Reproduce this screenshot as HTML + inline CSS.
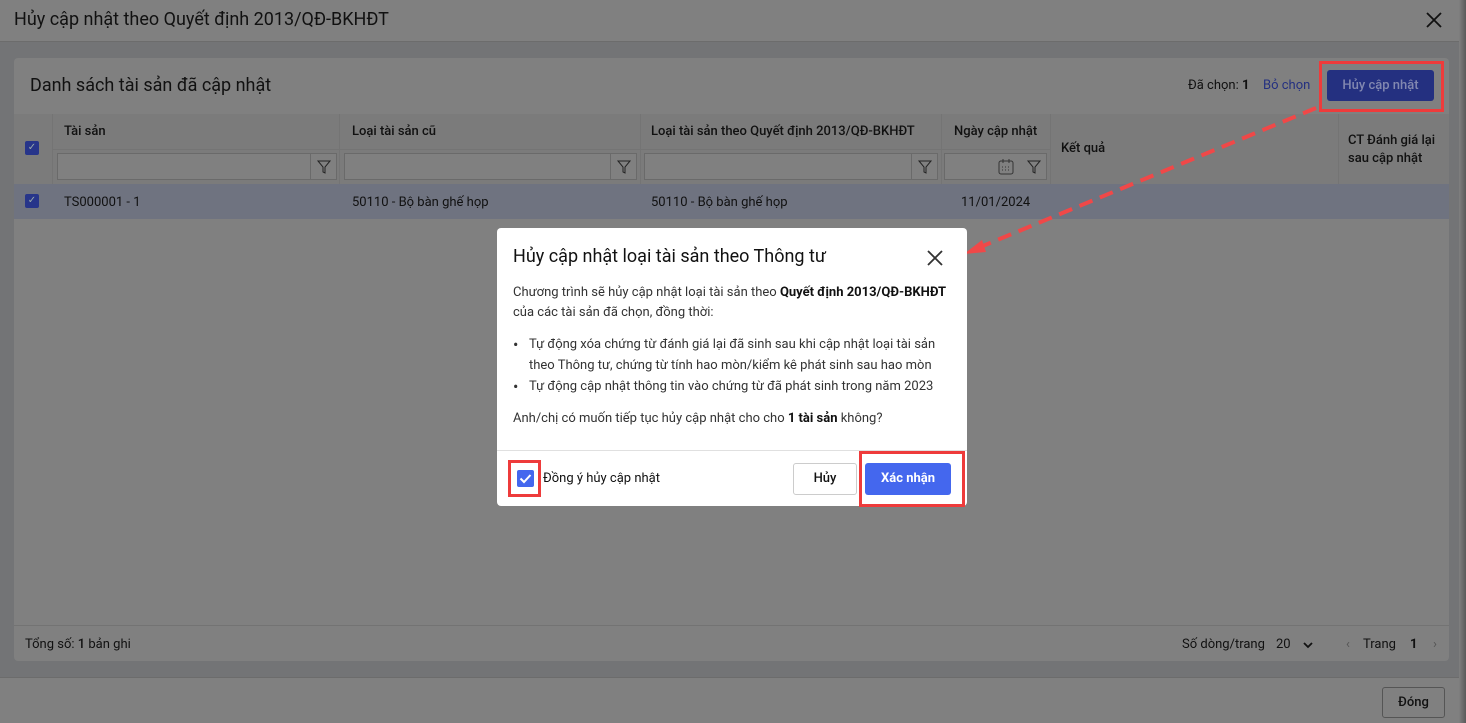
<!DOCTYPE html>
<html><head><meta charset="utf-8"><style>
*{box-sizing:border-box;margin:0;padding:0}
body{width:1466px;height:723px;overflow:hidden;font-family:"Roboto","Liberation Sans",sans-serif;background:#737476;position:relative;color:#1a1a1a}
.a{position:absolute}
.top{left:0;top:0;width:1466px;height:42px;background:#808080;border-bottom:1px solid #6c6c6c}
.panel{left:14px;top:58px;width:1435px;height:603px;background:#808080;border-radius:4px}
.th{background:#7b7b7b}
.cb{width:14px;height:14px;background:#27358a;border-radius:2px;color:#9aa;font-size:10px;line-height:14px;text-align:center}
.inp{height:27px;border:1px solid #6a6a6a;background:#808080}
.fi{position:absolute;right:0;top:0;width:26px;height:25px;border-left:1px solid #6a6a6a}
.t13{font-size:13px}
.dlg{left:497px;top:228px;width:470px;height:278px;background:#fff;border-radius:4px}
.red{border:3px solid #ee3b3b}
</style></head><body>
<div class="a top"></div>
<div class="a" style="left:14px;top:9px;font-size:18px;color:#111">Hủy cập nhật theo Quyết định 2013/QĐ-BKHĐT</div>
<svg class="a" style="left:1425px;top:11px" width="18" height="18"><path d="M2 2L16 16M16 2L2 16" stroke="#111" stroke-width="1.8"/></svg>
<div class="a panel"></div>
<div class="a" style="left:30px;top:75px;font-size:18px;color:#111">Danh sách tài sản đã cập nhật</div>
<div class="a t13" style="left:1188px;top:78px;color:#111">Đã chọn: <b>1</b></div>
<div class="a t13" style="left:1263px;top:78px;color:#243080">Bỏ chọn</div>
<div class="a" style="left:1327px;top:70px;width:107px;height:31px;background:#243080;border-radius:3px;color:#8288b0;font-size:13px;font-weight:500;text-align:center;line-height:31px">Hủy cập nhật</div>
<div class="a red" style="left:1319px;top:61px;width:125px;height:51px"></div>
<div class="a th" style="left:14px;top:114px;width:1435px;height:70px"></div>
<div class="a" style="left:52px;top:114px;width:1px;height:105px;background:#747474"></div>
<div class="a" style="left:339px;top:114px;width:1px;height:105px;background:#747474"></div>
<div class="a" style="left:640px;top:114px;width:1px;height:105px;background:#747474"></div>
<div class="a" style="left:941px;top:114px;width:1px;height:105px;background:#747474"></div>
<div class="a" style="left:1050px;top:114px;width:1px;height:105px;background:#747474"></div>
<div class="a" style="left:1338px;top:114px;width:1px;height:105px;background:#747474"></div>
<div class="a" style="left:52px;top:149px;width:998px;height:1px;background:#747474"></div>
<div class="a cb" style="left:25px;top:141px">✓</div>
<div class="a t13" style="left:64px;top:124px;color:#111;font-weight:500">Tài sản</div>
<div class="a t13" style="left:352px;top:124px;color:#111;font-weight:500">Loại tài sản cũ</div>
<div class="a t13" style="left:651px;top:124px;color:#111;font-weight:500">Loại tài sản theo Quyết định 2013/QĐ-BKHĐT</div>
<div class="a t13" style="left:954px;top:124px;color:#111;font-weight:500">Ngày cập nhật</div>
<div class="a t13" style="left:1061px;top:141px;color:#111;font-weight:500">Kết quả</div>
<div class="a t13" style="left:1348px;top:132px;color:#111;line-height:18px;font-weight:500">CT Đánh giá lại<br>sau cập nhật</div>
<div class="a inp" style="left:57px;top:153px;width:280px"><div class="fi"><svg width="26" height="25"><path d="M7 7h12l-5 6v6l-2-1v-5z" fill="none" stroke="#222" stroke-width="1"/></svg></div></div>
<div class="a inp" style="left:344px;top:153px;width:293px"><div class="fi"><svg width="26" height="25"><path d="M7 7h12l-5 6v6l-2-1v-5z" fill="none" stroke="#222" stroke-width="1"/></svg></div></div>
<div class="a inp" style="left:644px;top:153px;width:294px"><div class="fi"><svg width="26" height="25"><path d="M7 7h12l-5 6v6l-2-1v-5z" fill="none" stroke="#222" stroke-width="1"/></svg></div></div>
<div class="a inp" style="left:944px;top:153px;width:103px"><svg class="a" style="left:52px;top:4px" width="18" height="18"><rect x="2" y="3" width="14" height="13" rx="2" fill="none" stroke="#333"/><path d="M6 1v4M12 1v4" stroke="#333"/><path d="M5 9h1M8 9h1M11 9h1M5 12h1M8 12h1M11 12h1" stroke="#333"/></svg><svg class="a" style="left:76px;top:0" width="26" height="25"><path d="M7 7h12l-5 6v6l-2-1v-5z" fill="none" stroke="#222" stroke-width="1"/></svg></div>
<div class="a" style="left:14px;top:184px;width:1435px;height:35px;background:#6f7380"></div>
<div class="a cb" style="left:25px;top:194px">✓</div>
<div class="a t13" style="left:64px;top:195px;color:#111">TS000001 - 1</div>
<div class="a t13" style="left:352px;top:195px;color:#111">50110 - Bộ bàn ghế họp</div>
<div class="a t13" style="left:651px;top:195px;color:#111">50110 - Bộ bàn ghế họp</div>
<div class="a t13" style="left:961px;top:195px;color:#111">11/01/2024</div>
<div class="a" style="left:14px;top:625px;width:1435px;height:1px;background:#737373"></div>
<div class="a t13" style="left:25px;top:637px;color:#111">Tổng số: <b style="font-weight:500">1</b> bản ghi</div>
<div class="a t13" style="left:1182px;top:637px;color:#111">Số dòng/trang</div>
<div class="a t13" style="left:1276px;top:637px;color:#111">20</div>
<svg class="a" style="left:1302px;top:640px" width="12" height="10"><path d="M2 3l4 4 4-4" fill="none" stroke="#111" stroke-width="1.8"/></svg>
<div class="a t13" style="left:1346px;top:637px;color:#555">‹</div>
<div class="a t13" style="left:1363px;top:637px;color:#111">Trang</div>
<div class="a t13" style="left:1410px;top:637px;color:#111;font-weight:bold">1</div>
<div class="a t13" style="left:1433px;top:637px;color:#555">›</div>
<div class="a" style="left:0;top:677px;width:1466px;height:46px;background:#808080;border-top:1px solid #6c6c6c"></div>
<div class="a" style="left:1382px;top:687px;width:63px;height:31px;border:1px solid #555;border-radius:3px;font-size:13px;text-align:center;line-height:29px;color:#111;font-weight:500">Đóng</div>
<div class="a" style="left:1459px;top:0;width:7px;height:723px;background:linear-gradient(90deg,#808080,#5a5a5a)"></div>
<svg class="a" style="left:0;top:0" width="1466" height="723"><path d="M1316 108L978 248" stroke="#f04848" stroke-width="4" stroke-dasharray="14 8"/><path d="M964 254L982 240L986 252z" fill="#f04848"/></svg>
<div class="a dlg"></div>
<div class="a" style="left:513px;top:246px;font-size:18px;color:#111">Hủy cập nhật loại tài sản theo Thông tư</div>
<svg class="a" style="left:926px;top:249px" width="18" height="18"><path d="M2 2L16 16M16 2L2 16" stroke="#333" stroke-width="1.8"/></svg>
<div class="a t13" style="left:513px;top:283px;color:#333;line-height:20px">Chương trình sẽ hủy cập nhật loại tài sản theo <b style="color:#111">Quyết định 2013/QĐ-BKHĐT</b><br>của các tài sản đã chọn, đồng thời:</div>
<div class="a t13" style="left:513px;top:334px;color:#333;line-height:21px;width:440px">
<div style="padding-left:16px;position:relative"><span style="position:absolute;left:0;font-size:16px;line-height:21px">•</span>Tự động xóa chứng từ đánh giá lại đã sinh sau khi cập nhật loại tài sản theo Thông tư, chứng từ tính hao mòn/kiểm kê phát sinh sau hao mòn</div>
<div style="padding-left:16px;position:relative"><span style="position:absolute;left:0;font-size:16px;line-height:21px">•</span>Tự động cập nhật thông tin vào chứng từ đã phát sinh trong năm 2023</div></div>
<div class="a t13" style="left:513px;top:411px;color:#333">Anh/chị có muốn tiếp tục hủy cập nhật cho cho <b style="color:#111">1 tài sản</b> không?</div>
<div class="a" style="left:497px;top:450px;width:470px;height:1px;background:#e0e0e0"></div>
<div class="a" style="left:517px;top:470px;width:17px;height:17px;background:#4467ee;border-radius:2px"><svg width="17" height="17"><path d="M3.5 8.5l3.5 3.5 6.5-7" fill="none" stroke="#fff" stroke-width="2"/></svg></div>
<div class="a red" style="left:508px;top:460px;width:33px;height:37px"></div>
<div class="a t13" style="left:543px;top:471px;color:#111">Đồng ý hủy cập nhật</div>
<div class="a" style="left:793px;top:463px;width:64px;height:32px;border:1px solid #ccc;border-radius:3px;font-size:13px;text-align:center;line-height:30px;color:#111;font-weight:500">Hủy</div>
<div class="a" style="left:865px;top:463px;width:86px;height:32px;background:#4467ee;border-radius:3px;font-size:13px;text-align:center;line-height:32px;color:#fff;font-weight:bold">Xác nhận</div>
<div class="a red" style="left:859px;top:451px;width:106px;height:56px"></div>
</body></html>
